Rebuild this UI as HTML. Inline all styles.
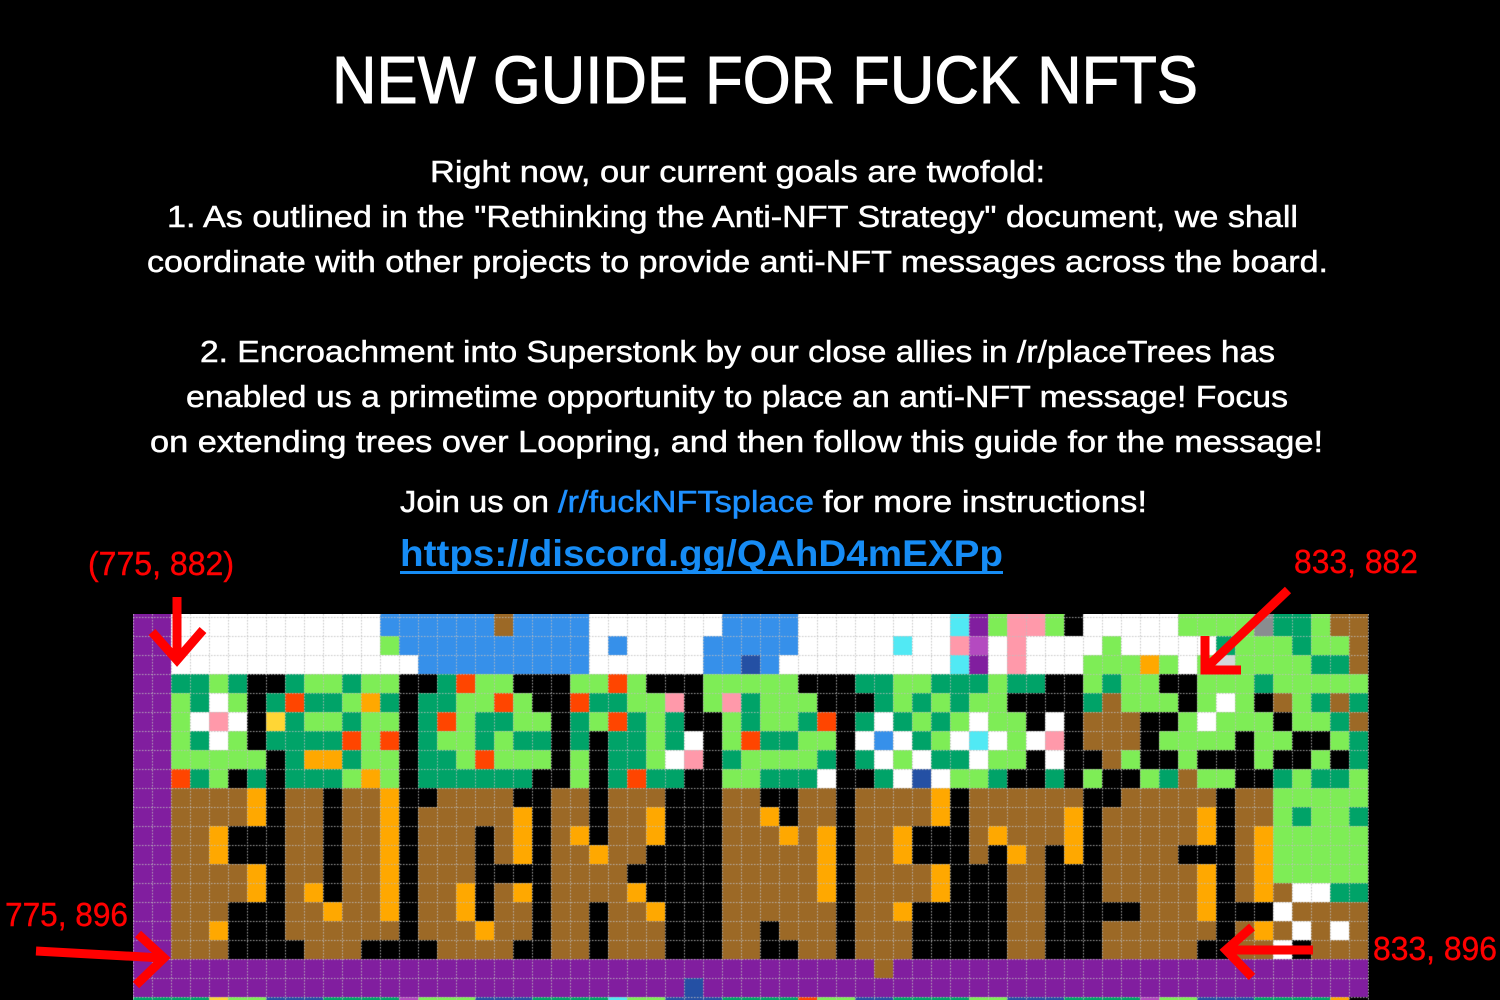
<!DOCTYPE html>
<html><head><meta charset="utf-8"><style>
html,body{margin:0;padding:0;background:#000;width:1500px;height:1000px;overflow:hidden}
#c{position:absolute;left:133px;top:614px}
svg{position:absolute;left:0;top:0}
</style></head><body>
<canvas id="c" width="1236" height="386"></canvas>
<svg width="1500" height="1000" xmlns="http://www.w3.org/2000/svg" font-family="Liberation Sans, DejaVu Sans, sans-serif">
<text x="765" y="103" font-size="67" fill="#fff" text-anchor="middle" textLength="866" lengthAdjust="spacingAndGlyphs" stroke="#fff" stroke-width="1">NEW GUIDE FOR FUCK NFTS</text>
<g font-size="31" fill="#fff" stroke="#fff" stroke-width="0.5">
<text x="430" y="182" textLength="615" lengthAdjust="spacingAndGlyphs">Right now, our current goals are twofold:</text>
<text x="167" y="227" textLength="1131" lengthAdjust="spacingAndGlyphs">1. As outlined in the "Rethinking the Anti-NFT Strategy" document, we shall</text>
<text x="147" y="272" textLength="1181" lengthAdjust="spacingAndGlyphs">coordinate with other projects to provide anti-NFT messages across the board.</text>
<text x="200" y="362" textLength="1075" lengthAdjust="spacingAndGlyphs">2. Encroachment into Superstonk by our close allies in /r/placeTrees has</text>
<text x="186" y="407" textLength="1102" lengthAdjust="spacingAndGlyphs">enabled us a primetime opportunity to place an anti-NFT message! Focus</text>
<text x="150" y="452" textLength="1173" lengthAdjust="spacingAndGlyphs">on extending trees over Loopring, and then follow this guide for the message!</text>
<text x="400" y="512" textLength="149" lengthAdjust="spacingAndGlyphs">Join us on</text>
<text x="558" y="512" textLength="256" lengthAdjust="spacingAndGlyphs" fill="#1e90ff" stroke="#1e90ff">/r/fuckNFTsplace</text>
<text x="823" y="512" textLength="324" lengthAdjust="spacingAndGlyphs">for more instructions!</text>
</g>
<text x="400" y="566" font-size="37" font-weight="bold" fill="#168cf5" textLength="603" lengthAdjust="spacingAndGlyphs">https://discord.gg/QAhD4mEXPp</text>
<rect x="400" y="571" width="603" height="3" fill="#168cf5"/>
<g font-size="33" fill="#ff0000" stroke="#ff0000" stroke-width="0.4">
<text x="88" y="575" textLength="146" lengthAdjust="spacingAndGlyphs">(775, 882)</text>
<text x="1294" y="573" textLength="124" lengthAdjust="spacingAndGlyphs">833, 882</text>
<text x="5" y="926" textLength="123" lengthAdjust="spacingAndGlyphs">775, 896</text>
<text x="1373" y="960" textLength="124" lengthAdjust="spacingAndGlyphs">833, 896</text>
</g>
<g stroke="#ff0000" stroke-width="9" fill="none" stroke-linecap="butt">
<line x1="177" y1="597" x2="177" y2="658"/>
<polyline points="152,632 177,660 203,630"/>
<line x1="1288" y1="590" x2="1207" y2="667"/>
<polyline points="1205,636 1205,670 1241,670"/>
<line x1="36" y1="951" x2="162" y2="958"/>
<polyline points="138,934 164,958 136,985"/>
<line x1="1313" y1="950" x2="1226" y2="950"/>
<polyline points="1252,927 1226,950 1252,977"/>
</g>
</svg>
<script>
(function(){
var C={P:'#811e9f',W:'#ffffff',B:'#3690ea',D:'#2450a4',G:'#00a368',L:'#7eed56',K:'#000000',O:'#ff4500',Y:'#ffa800',N:'#9c6926',p:'#ff99aa',y:'#ffd635',C:'#51e9f4',M:'#b44ac0',g:'#898d90',l:'#d4d7d9'};
var R=[
"PPWWWWWWWWWWWBBBB"+"BBNBBBBWWWWWWWBB"+"BBWWWWWWWWCPLppL"+"KWWWWWLLLLgGGLNN",
"PPWWWWWWWWWWWLBBB"+"BBBBBBBWBWWWWBBB"+"BBWWWWWCWWpMWpWW"+"WWLWWWWWGLLLGLLN",
"PPWWWWWWWWWWWWWBB"+"BBBBBBBWWWWWWBBD"+"BWWWWWWWWWCPWpWW"+"WLLLYLWLlLLLLGGN",
"PPGGLGKKGLLGLLKKG"+"OLLKKKLLOLKKKLLL"+"LLKKKGGLLGGGLGGK"+"KLGLLKKLLLGLLLLL",
"PPLGWLKGOGGLYGKGG"+"LLOLKKOGGLLpKLpG"+"LLLKKKGLGLGLLKKK"+"KGNLLLKLWLKNLGNG",
"PPLWpWKyGLLGLLKGO"+"LGGLLKGLOGLGKKLG"+"LLGOKGWGLGLWLLKW"+"KNNNKKLWLLLKLLGN",
"PPLGWLKGGGGOLOKGL"+"LGLGGKGKGGLGWKLO"+"GGLLKWBWGLWCWLWp"+"KNNNKLLLLKLLKKLG",
"PPLLLLLKGYYGLLKGG"+"LOLLLKLKGGLWpKGL"+"LLLGKGWLWGGWLLKW"+"KKNLKKLKKKLKKLKG",
"PPOGLKGKGGGLYLKGG"+"GGGGKKLKGOGGKKLL"+"GGGWKKGWDWLLGKKG"+"KLKKLGNLLKKGLGGL",
"PPNNNNYKNNKNNYKKN"+"NNNKKNNKNNNKKKNN"+"KKNNKNNNNYKNNNNN"+"NKKNNNNNKNNLLLLL",
"PPNNNNYKNNKNNYKNN"+"NNNYKNNKNNYKKKNN"+"YKNNKNNNNYKNNNNN"+"YKNNNNNYKNNLGLLG",
"PPNNYKKKNNKNNYKNN"+"NKNYKNYKNNYKKKNN"+"NYNYKNNYKKKNYNNN"+"YKNNNNNYKNYLLLLL",
"PPNNYKKKNNKNNYKNN"+"NKNYKNNYNNKKKKNN"+"NNNYKNNYKKKNKYNK"+"YKNNNNKKKNYLLLLL",
"PPNNNNYKNNKNNYKNN"+"NKKKKNNNNKKKKKNN"+"NNNYKNNNNYKKKNNK"+"KKNNNNNYKNYLLLLL",
"PPNNNNYKNYKNNYKNN"+"YKNYKNNNNYKKKKNN"+"NNNYKNNNNYKKKNNK"+"KKNNNNNYKNYNWWGG",
"PPNNNKKKNNYNNYKNN"+"YKNNKNNKNNYKKKNN"+"NNNNKNNYKKKKKNNK"+"KKKKNNNYKKKWNNNN",
"PPNNYKKKNNNNNNKNN"+"NYNNKNNKNNNKKKNN"+"KNNNKNNNKKKKKNNK"+"KKNNNNNNKNYNWNWN",
"PPNNNKKKKNNNKKKKN"+"NNNKKNNKNNNKKKNN"+"KKNNKNNNKKKKKNNK"+"KKNNNNNKKNNWKNNN"
];
var r18="",r19="";for(var i=0;i<65;i++){r18+=(i==39?"N":"P");r19+=(i==29?"D":"P");}
R.push(r18,r19);
R.push("GGGGyLLDDDGGGGMLLLDDDGGGGCLLDDDGGGGOLLDDGGGGLLDDDGGGGMLLDDDGGGGY");
var cv=document.getElementById('c'),x=cv.getContext('2d');
x.fillStyle='#000';x.fillRect(0,0,1236,386);
function rowTop(r){return 3+19*r;}
for(var r=-1;r<R.length;r++){
 var s=R[r<0?0:r];var y0=r<0?0:rowTop(r),h=r<0?3:19;
 for(var c=0;c<65;c++){var ch=s.charAt(c)||'K';x.fillStyle=C[ch]||'#000';x.fillRect(19*c,y0,19,Math.min(h,386-y0));}
}
x.fillStyle='rgba(190,190,190,0.85)';
for(var c2=0;c2<=65;c2++){var gx=Math.min(19*c2,1235);for(var y=0;y<386;y+=3)x.fillRect(gx,y,1,1.5);}
for(var r2=0;r2<=20;r2++){var gy=rowTop(r2);for(var xx=0;xx<1236;xx+=3)x.fillRect(xx,gy,1.5,1);}
})();
</script>
</body></html>
